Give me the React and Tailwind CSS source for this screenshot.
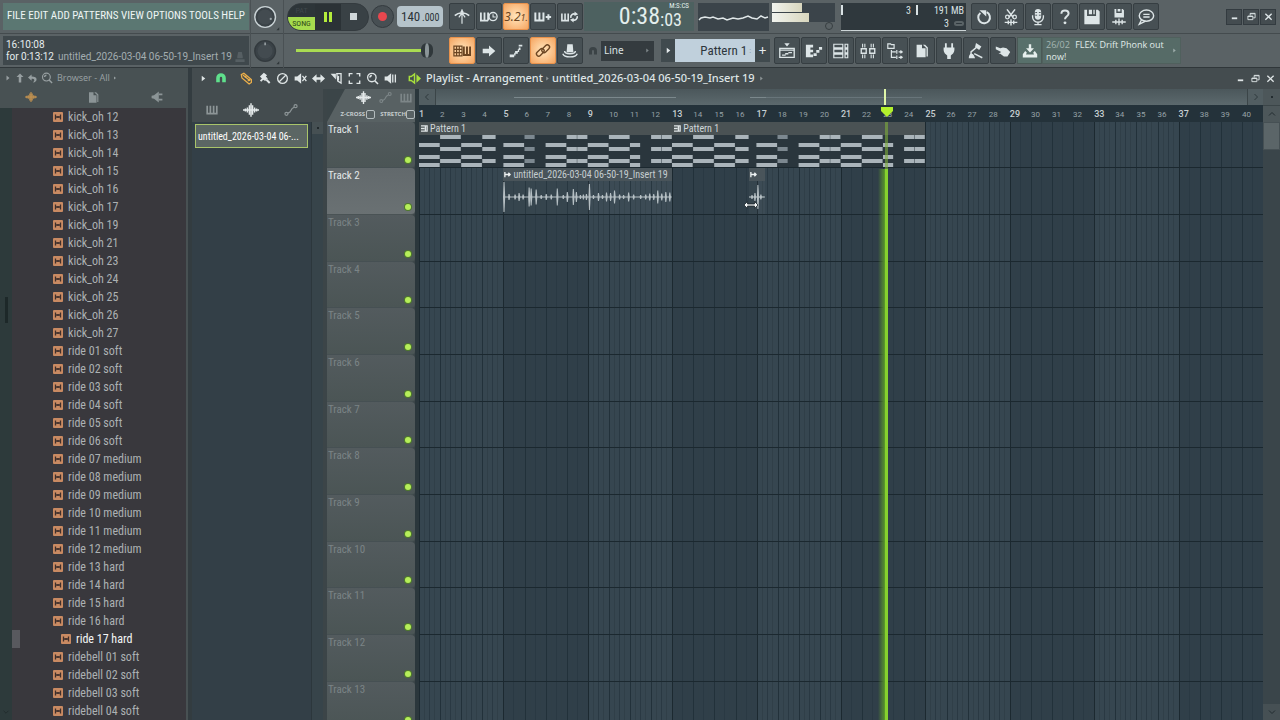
import clsx from "clsx";

const narrow = "font-['Roboto_Condensed','Open_Sans_Condensed','Roboto',sans-serif]";

const icons = {
  metronome: <><path d="M2 8.500c2-2 5-3 8-3s6 1 8 3" fill="none" stroke="currentColor" strokeWidth="1.800" /><path d="M10 1.500v16M10 5.500l-3.500 5M10 5.500l3.500 5" fill="none" stroke="currentColor" strokeWidth="1.300" /><path d="M7.500 5l2.500-3 2.500 3z" fill="currentColor" /></>,
  waitInput: <><path d="M1 5v9h8" fill="none" stroke="currentColor" strokeWidth="2" /><path d="M5 5v9M9 5v9" stroke="currentColor" strokeWidth="2" /><circle cx="14.500" cy="9.500" r="4.500" fill="none" stroke="currentColor" strokeWidth="1.500" /><path d="M14.500 7v3h3" fill="none" stroke="currentColor" strokeWidth="1.200" /></>,
  overdub: <path d="M1.500 5v9h9V5M6 5v9M13 10h6M16 7v6" fill="none" stroke="currentColor" strokeWidth="2.200" />,
  loopRec: <><path d="M1 6v8h7V6M4.500 6v8" fill="none" stroke="currentColor" strokeWidth="1.800" /><path d="M11 11a3.500 3.500 0 0 1 5-4M18 9a3.500 3.500 0 0 1-5 4" fill="none" stroke="currentColor" strokeWidth="1.800" /><path d="M15 4l4 3-4 2zM14 16l-4-3 4-2z" fill="currentColor" /></>,
  typing: <><path d="M1 4.500h9v11H1zM1 8.200h9M1 11.800h9M4 4.500v11M7 4.500v11" fill="none" stroke="currentColor" strokeWidth="1.300" /><path d="M12 5v9.500h7V5M15.500 5v9" fill="none" stroke="currentColor" strokeWidth="2.200" /></>,
  arrow: <path d="M3 7.500h7V4l7 6-7 6v-3.500H3z" fill="currentColor" />,
  steps: <path d="M3 14h5v3H3zM9 10h3v3H9zM13 6h2v3h-2zM13 3h4v2h-4zM8 12h1.500v3H8zM12 8h1.500v3H12z" fill="currentColor" />,
  link: <><rect x="2" y="9" width="10" height="5" rx="2.500" transform="rotate(-45 7 11.500)" fill="none" stroke="currentColor" strokeWidth="1.500" /><rect x="8" y="5" width="10" height="5" rx="2.500" transform="rotate(-45 13 7.500)" fill="none" stroke="currentColor" strokeWidth="1.500" /></>,
  hat: <><path d="M7 2.500h6l.8 9H6.200z" fill="currentColor" /><path d="M4 10c0 2 3 3 6 3s6-1 6-3M2 13c1 3 4 3.500 8 3.500s7-.5 8-3.500" fill="none" stroke="currentColor" strokeWidth="1.600" /></>,
  playlist: <><path d="M2 7h16v10H2z" fill="none" stroke="currentColor" strokeWidth="1.500" /><path d="M2 9h16M4.500 14.500h4M8 13h3.500M11.500 11.800h4" stroke="currentColor" strokeWidth="1.500" /><path d="M7 1.500h6L10 5z" fill="currentColor" /></>,
  pianoRoll: <path d="M1 3h8v3H6v2.500h3v3H6V14h3v3H1zM9.500 12.500H13v3H9.500zM12.500 9H16v3h-3.500zM15.500 5.500H19v3h-3.500z" fill="currentColor" />,
  rack: <path d="M2 2.500h10v4H2zM2 8h10v4H2zM2 13.500h10v4H2zM14.500 2.500h3v4h-3zM14.500 8h3v4h-3zM14.500 13.500h3v4h-3z" fill="none" stroke="currentColor" strokeWidth="1.300" />,
  mixer: <><path d="M2.500 7.500h5.500v5H2.500zM12 7.500h5.500v5H12z" fill="none" stroke="currentColor" strokeWidth="1.500" /><path d="M4 2v4M6.500 2v4M13.500 2v4M16 2v4M4 14v4M6.500 14v4M13.500 14v4M16 14v4" stroke="currentColor" strokeWidth="1.200" /></>,
  tree: <path d="M2 2h3l1 1h3v4H2zM6 9v8h5M6 11h5M12 9v4M14 11h4M12 15v4M14 17h4M16 9.500l2 1.500-2 1.500M16 15.500l2 1.500-2 1.500" fill="none" stroke="currentColor" strokeWidth="1.300" />,
  file: <><path d="M4 3h6v4h4v10H4z" fill="currentColor" /><path d="M11 3l4 4v9h1.500V6l-3-3z" fill="currentColor" /></>,
  plug: <path d="M5.500 1.500h2V6h5V1.500h2V6H16v3c0 3-2.500 5-4 6v4H8v-4c-1.500-1-4-3-4-6V6h1.500z" fill="currentColor" />,
  lamp: <><path d="M4.500 17V11l6-5M8 13l9 4.500" fill="none" stroke="currentColor" strokeWidth="1.600" /><path d="M10 1l6 4-2.500 4L9 5.500zM2 18c0-3 1-5 3-5s3 2 4 5z" fill="currentColor" /></>,
  hand: <path d="M2 5l5 2 3-1 4 1 4 4-3 5h-4l-4-3H5l3-2-6-3z" fill="currentColor" />,
  download: <><path d="M8.500 1.500h3v5H15l-5 5.500-5-5.500h3.500z" fill="currentColor" /><path d="M4 10l-3 4v4h18v-4l-3-4-2 2 1 2.500H5L6 12z" fill="currentColor" /></>,
  undo: <><path d="M6 5.500a6.500 6.500 0 1 0 7-.8" fill="none" stroke="currentColor" strokeWidth="2.200" /><path d="M5 2.500h7.500v7z" fill="currentColor" /></>,
  cut: <><path d="M5.500 1.500l7 9M14.500 1.500l-7 9" stroke="currentColor" strokeWidth="1.700" /><circle cx="6" cy="10" r="2" fill="none" stroke="currentColor" strokeWidth="1.400" /><circle cx="14" cy="10" r="2" fill="none" stroke="currentColor" strokeWidth="1.400" /><path d="M3 16h14M7 14v4M10 12.500v7M13 14v4" stroke="currentColor" strokeWidth="1.600" /></>,
  mic: <><rect x="6.500" y="1" width="7" height="12" rx="3.500" fill="currentColor" /><path d="M4 8v2a6 6 0 0 0 12 0V8M10 15v3M6 18.500h8" fill="none" stroke="currentColor" strokeWidth="1.500" /><path d="M7 5h2M7 8h2M11 5h2M11 8h2" stroke="#454e52" strokeWidth="1" /></>,
  help: <><path d="M6 6.500C6 4 7.500 2.700 10 2.700s4 1.300 4 3.500c0 3-4 3-4 6.300" fill="none" stroke="currentColor" strokeWidth="2.200" /><circle cx="10" cy="16.500" r="1.600" fill="currentColor" /></>,
  save: <path d="M1.500 2h3v7h10V2h2l2 2v14h-17zM6.500 2H10v5H6.500zM11.500 2h1.500v5h-1.500z" fill="currentColor" />,
  saveNew: <><path d="M5 1h2v4.500h6V1h1l1.500 1.500V10.500H5zM8.500 1h3v3h-3z" fill="currentColor" /><path d="M2.500 15.500h15M6.500 13v5M10 11.800v7.500M13.500 13v5" stroke="currentColor" strokeWidth="1.500" /></>,
  chat: <><ellipse cx="10.500" cy="8.500" rx="8" ry="6.200" fill="none" stroke="currentColor" strokeWidth="1.600" /><path d="M5 13l-2.500 5 7-3.500M7 7h7M7 10h7" fill="none" stroke="currentColor" strokeWidth="1.500" /></>,
  magnet: <path d="M2 17v-7a8 8 0 0 1 16 0v7h-6v-7a2 2 0 0 0-4 0v7z" fill="currentColor" />,
  pencil: <path d="M2 4l4-2 11.500 9.500V16L14 18.500 3 9zM4.500 4.500l11 9M7.500 8.500l2-2.500M12 14l3.500-3" fill="none" stroke="currentColor" strokeWidth="1.900" />,
  brush: <><path d="M3 7l6-6 5 4-2 2 3 3-4 4-3-2-3 3-2-2 3-3z" fill="currentColor" /><path d="M13 12l5 5" stroke="currentColor" strokeWidth="3" /></>,
  ban: <><circle cx="10" cy="10" r="7.500" fill="none" stroke="currentColor" strokeWidth="2" /><path d="M5 15L15 5" stroke="currentColor" strokeWidth="2" /></>,
  mute: <><path d="M1 7h4l6-5v16l-6-5H1z" fill="currentColor" /><path d="M13 6l6 8M19 6l-6 8" stroke="currentColor" strokeWidth="2" /></>,
  slip: <path d="M0 10l7-6.500V8h6V3.500L20 10l-7 6.500V12H7v4.500z" fill="currentColor" />,
  slice: <><path d="M1 2.500h8v9z" fill="currentColor" /><path d="M10.500 2.500H17v14.500l-5-3z" fill="none" stroke="currentColor" strokeWidth="2" /><path d="M13 6v7" stroke="currentColor" strokeWidth="2" /></>,
  select: <path d="M2 7V2.500h5M13 2.500h5V7M18 13v4.500h-5M7 17.500H2V13" fill="none" stroke="currentColor" strokeWidth="2.200" />,
  zoom: <><circle cx="9" cy="8.500" r="6.500" fill="none" stroke="currentColor" strokeWidth="2" /><path d="M6 8.500a3 3 0 0 1 3-3M13.500 13.500l5 5" fill="none" stroke="currentColor" strokeWidth="2.400" /></>,
  speaker: <><path d="M1 7h4l6-5v16l-6-5H1z" fill="currentColor" /><path d="M13.500 4v12M17.500 4v12" stroke="currentColor" strokeWidth="2" /></>,
  playSpeaker: <><path d="M2 7h3l5-4v14l-5-4H2z" fill="none" stroke="currentColor" strokeWidth="2.200" /><path d="M13 3.500l7 6.500-7 6.500z" fill="currentColor" /></>,
  keys: <path d="M2 3v13h16V3M7.300 3v13M12.700 3v13" fill="none" stroke="currentColor" strokeWidth="2.800" />,
  wave: <path d="M0 10h20M3 8v4M5.500 7v6M8 4v12M10 1.500v17M12 4v12M14.500 7v6M17 8v4" stroke="currentColor" strokeWidth="1.800" />,
  automation: <><path d="M5.500 14.500l3-1.500 3-5 3-2" fill="none" stroke="currentColor" strokeWidth="1.700" /><circle cx="3.500" cy="15.500" r="2.200" fill="none" stroke="currentColor" strokeWidth="1.700" /><circle cx="16.500" cy="4.500" r="2.200" fill="none" stroke="currentColor" strokeWidth="1.700" /></>,
  up: <path d="M10 1l7 7h-4.500v11h-5V8H3z" fill="currentColor" />,
  back: <path d="M8 1L0 8l8 7v-4.500c4 0 6 .5 6 3s-1 3-3 5.500c6-1 8-4 8-7.500 0-4-4-6-11-6z" fill="currentColor" />,
  megaphone: <><path d="M1 8l4-1 8-6v18l-8-6-4-1z" fill="currentColor" /><path d="M13 5.500h6M13 14.500h6" stroke="currentColor" strokeWidth="3" /></>,
  triangle: <path d="M5 2l10 8-10 8z" fill="currentColor" />,
  min: <path d="M4 12h12v4H4z" fill="currentColor" />,
  restore: <path d="M2 9h11v8H2zM7 8V3h11v10h-4M2 10h11M7 4h11" fill="none" stroke="currentColor" strokeWidth="2" />,
  close: <path d="M3 4l14 13M17 4L3 17" stroke="currentColor" strokeWidth="3" />,
  left: <path d="M13 4l-6 6 6 6" fill="none" stroke="currentColor" strokeWidth="2" />,
  right: <path d="M7 4l6 6-6 6" fill="none" stroke="currentColor" strokeWidth="2" />,
  chevUp: <path d="M4 13l6-6 6 6" fill="none" stroke="currentColor" strokeWidth="2" />,
  chevDown: <path d="M4 7l6 6 6-6" fill="none" stroke="currentColor" strokeWidth="2" />,
};

const Icon = ({ name, className = "size-4" }) => (
  <svg viewBox="0 0 20 20" className={clsx("shrink-0", className)} aria-hidden="true">
    {icons[name]}
  </svg>
);

const ToolButton = ({ icon, label, active, children }) => (
  <button
    aria-label={label}
    className={clsx(
      "flex h-[27px] w-[26px] shrink-0 items-center justify-center rounded-xs border",
      active
        ? "border-[#e8924c] bg-radial from-[#ffe6bd] to-[#f5a55f] text-[#6b4522]"
        : "border-[#363e42] bg-[#475054] text-[#dde5e7]"
    )}
  >
    {children || <Icon name={icon} className="size-[18px]" />}
  </button>
);

const Knob = ({ ring }) => (
  <svg viewBox="0 0 34 34" className="h-[34px] w-[34px] shrink-0 border-x border-[#4a5154]">
    <circle cx="15" cy="17" r="11" fill="#3a4247" stroke={ring ? "#c9d2d5" : "#333a3e"} strokeWidth="1.500" />
    <circle cx="15" cy="17" r="8" fill="#434b50" />
    {ring ? <circle cx="21" cy="19" r="1.200" fill="#9aa5a8" /> : <path d="M15 8v3" stroke="#a4adb0" strokeWidth="1.500" />}
    <path d="M30 28v3h-3z" fill="#30373a" />
  </svg>
);

const menus = ["FILE", "EDIT", "ADD", "PATTERNS", "VIEW", "OPTIONS", "TOOLS", "HELP"];

const TopBar = () => (
  <div className="flex h-[34px] items-center border-b border-[#444b4e]">
    <nav className={clsx("ml-[3px] flex h-[27px] w-[246px] shrink-0 items-center justify-between bg-[#5b7772] px-1 text-[11px] text-[#eef5f4]", narrow)}>
      {menus.map((m) => (
        <button key={m}>{m}</button>
      ))}
    </nav>
    <div className="w-px" />
    <Knob ring />
    <div className="ml-[3px] flex h-[28px] w-[82px] shrink-0 overflow-hidden rounded-[14px] border border-[#343b3f] bg-[#394145]">
      <button className={clsx("flex w-[27px] flex-col bg-[#2d3539] text-[8px]", narrow)} aria-label="Pattern or song mode">
        <span className="h-[13px] w-full leading-[13px] text-[#3f474b]">PAT</span>
        <span className="h-[13px] w-full bg-[#a6dc4e] leading-[13px] text-[#2f4a18]">SONG</span>
      </button>
      <button aria-label="Pause" className="flex w-[26px] items-center justify-center gap-[2px] bg-[#2b3236]">
        <span className="h-[10px] w-[3px] bg-[#b4ec3c]" />
        <span className="h-[10px] w-[3px] bg-[#b4ec3c]" />
      </button>
      <button aria-label="Stop" className="flex flex-1 items-center justify-center pr-[2px]">
        <span className="size-[7px] bg-[#d0d7d9]" />
      </button>
    </div>
    <button aria-label="Record" className="ml-[2px] flex size-[23px] shrink-0 items-center justify-center rounded-full border border-[#343b3f] bg-[#474f53]">
      <span className="size-[9px] rounded-full bg-[#e8474e]" />
    </button>
    <label className={clsx("ml-[3px] flex h-[21px] w-[46px] shrink-0 items-center rounded-sm bg-[#b5c3ca] pl-1 text-[#2b3338]", narrow)}>
      <input aria-label="Tempo" defaultValue="140" className="w-[21px] bg-transparent text-[13px] outline-none" />
      <span className="pt-0.5 text-[10px]">.000</span>
    </label>
    <div className="ml-[6px] flex gap-px">
      <ToolButton icon="metronome" label="Metronome" />
      <ToolButton icon="waitInput" label="Wait for input" />
      <ToolButton label="Countdown" active>
        <span className="text-xs italic">3.2<span className="text-[9px]">1.</span></span>
      </ToolButton>
      <ToolButton icon="overdub" label="Overdub" />
      <ToolButton icon="loopRec" label="Loop record" />
    </div>
    <div className={clsx("ml-px flex h-[29px] w-[110px] shrink-0 justify-end bg-[#4d6160] pr-[5px] text-[#e3eeec]", narrow)}>
      <span className="text-2xl leading-[29px]">0:38</span>
      <div className="flex w-[29px] flex-col">
        <span className="self-end text-[7px] leading-[8px]">M:S:CS</span>
        <span className="text-lg leading-[20px]">:03</span>
      </div>
    </div>
    <svg viewBox="0 0 71 28" className="ml-1 h-[28px] w-[71px] shrink-0 bg-[#3b444a]">
      <path d="M1 17l2-2 4-1 5 1 3-1 5 2 5-1 4 2 6-2 5 1 5-1 5-2 4 2 5 1 4-3 4 2 3-1" fill="none" stroke="#e0e7e8" strokeWidth="1.500" />
    </svg>
    <div className="ml-[3px] flex h-[28px] w-[63px] shrink-0 flex-col">
      <div className="flex h-[19px] flex-col gap-px bg-[#3b444a]">
        <span className="h-[9px] w-[30px] bg-linear-to-r from-[#f1f3ee] to-[#d8d6bd]" />
        <span className="h-[9px] w-[37px] bg-linear-to-r from-[#f1f3ee] to-[#d8d6bd]" />
      </div>
      <span className="mr-0.5 size-[8px] self-end rounded-full border border-[#373e41]" />
    </div>
    <div className={clsx("ml-[6px] flex h-[28px] w-[125px] shrink-0 border-b border-[#cdd5d7] bg-[#2f383d] pt-px text-[10px] leading-[13px] text-[#d9e2e4]", narrow)}>
      <span className="mt-px h-[10px] w-[2px] bg-[#d9e2e4]" />
      <span className="w-[68px] text-right">3</span>
      <span className="mt-px ml-[5px] h-[10px] w-[2px] bg-[#d9e2e4]" />
      <div className="flex flex-1 flex-col pr-[2px]">
        <span className="text-right">191 MB</span>
        <span className="flex items-center justify-end gap-[5px]">
          3<span className="h-[5px] w-[10px] rounded-full border-2 border-[#5a6366]" />
        </span>
      </div>
    </div>
    <div className="ml-[5px] flex gap-px">
      <ToolButton icon="undo" label="Undo" />
      <ToolButton icon="cut" label="Edison" />
      <ToolButton icon="mic" label="Record audio" />
      <ToolButton icon="help" label="Help" />
      <ToolButton icon="save" label="Save" />
      <ToolButton icon="saveNew" label="Save new version" />
      <ToolButton icon="chat" label="Feedback" />
    </div>
    <div className="mr-[4px] ml-auto flex gap-px text-[#dde5e7]">
      {["min", "restore", "close"].map((n) => (
        <button key={n} aria-label={n} className="flex size-4 items-center justify-center border border-[#333b40] bg-[#444c50]">
          <Icon name={n} className="size-[9px]" />
        </button>
      ))}
    </div>
  </div>
);

const SecondBar = () => (
  <div className="flex h-[34px] items-center border-b border-[#30373a]">
    <div className="ml-[3px] flex h-[29px] w-[246px] shrink-0 flex-col justify-center bg-[#3f484c] pl-[3px] font-['Roboto',sans-serif] text-[10px] leading-[12px] text-[#e6ecee]">
      <span>16:10:08</span>
      <span className="flex items-center">
        for 0:13:12 <span className="ml-[4px] text-[#a3adb0]">untitled_2026-03-04 06-50-19_Insert 19</span>
        <svg viewBox="0 0 10 12" className="ml-[3px] h-[11px] w-[10px]">
          <path d="M3 1h4l1 5v2H2V6zM0 9h10v3H0z" fill="#565f63" />
        </svg>
      </span>
    </div>
    <div className="w-px" />
    <Knob />
    <input
      type="range"
      aria-label="Main volume"
      defaultValue="100"
      className="ml-[12px] h-4 w-[137px] shrink-0 appearance-none bg-[linear-gradient(#a9db52,#a9db52)] bg-size-[100%_3px] bg-center bg-no-repeat [&::-webkit-slider-thumb]:h-[15px] [&::-webkit-slider-thumb]:w-[12px] [&::-webkit-slider-thumb]:appearance-none [&::-webkit-slider-thumb]:rounded-full [&::-webkit-slider-thumb]:border-x-4 [&::-webkit-slider-thumb]:border-[#30383b] [&::-webkit-slider-thumb]:bg-[#8b9598]"
    />
    <div className="ml-[16px] flex gap-px">
      <ToolButton icon="typing" label="Typing keyboard" active />
      <ToolButton icon="arrow" label="Step edit" />
      <ToolButton icon="steps" label="Note slide" />
      <ToolButton icon="link" label="Multilink" active />
      <ToolButton icon="hat" label="Big knob" />
    </div>
    <div className="ml-[2px] flex w-[16px] shrink-0 justify-center text-[#3b4346]">
      <Icon name="magnet" className="size-[10px]" />
    </div>
    <div className="flex h-[20px] w-[53px] shrink-0 items-center bg-[#343b3f] pr-1 text-[#dce3e5]">
      <select aria-label="Snap" className="w-full appearance-none pl-[3px] text-[10px] outline-none">
        <option>Line</option>
      </select>
      <Icon name="triangle" className="size-[5px] text-[#7d8689]" />
    </div>
    <div className="ml-[7px] flex h-[23px] w-[109px] shrink-0 text-[#e6ecee]">
      <button aria-label="Patterns" className="flex w-[14px] items-center justify-center bg-[#404a4e]">
        <Icon name="triangle" className="size-[7px]" />
      </button>
      <button className={clsx("flex flex-1 items-center justify-end gap-[2px] bg-[#c0d0dc] pr-1 text-[13px] text-[#2d363c]", narrow)}>
        Pattern 1<span className="text-[8px] text-[#7f8d97]">:</span>
      </button>
      <button aria-label="Add pattern" className="w-[15px] bg-[#404a4e] text-sm">+</button>
    </div>
    <div className="ml-[4px] flex gap-px">
      <ToolButton icon="playlist" label="Playlist" />
      <ToolButton icon="pianoRoll" label="Piano roll" />
      <ToolButton icon="rack" label="Channel rack" />
      <ToolButton icon="mixer" label="Mixer" />
      <ToolButton icon="tree" label="Browser" />
      <ToolButton icon="file" label="Project" />
      <ToolButton icon="plug" label="Plugins" />
      <ToolButton icon="lamp" label="Tempo tapper" />
      <ToolButton icon="hand" label="Touch" />
    </div>
    <button aria-label="Download" className="ml-px flex h-[27px] w-[25px] shrink-0 items-center justify-center border border-[#4a5956] bg-[#58706b] text-[#e6efed]">
      <Icon name="download" className="size-4" />
    </button>
    <button className="flex h-[27px] w-[139px] shrink-0 items-center border border-[#50605d] bg-[#566b67] pr-[3px] pl-[3px] text-left font-['Open_Sans',sans-serif] text-[9px] leading-[12px] text-[#e0ebe9]">
      <span className="flex-1">
        <span className="block"><span className="mr-[3px] text-[#a5b6b3]">26/02</span> FLEX: Drift Phonk out</span>
        <span className="block">now!</span>
      </span>
      <Icon name="triangle" className="size-[5px] text-[#9cacaa]" />
    </button>
  </div>
);

const samples = [
  ...["12", "13", "14", "15", "16", "17", "19", "21", "23", "24", "25", "26", "27"].map((n) => `kick_oh ${n}`),
  ...["01", "02", "03", "04", "05", "06"].map((n) => `ride ${n} soft`),
  ...["07", "08", "09", "10", "11", "12"].map((n) => `ride ${n} medium`),
  ...["13", "14", "15", "16", "17"].map((n) => `ride ${n} hard`),
  ...["01", "02", "03", "04"].map((n) => `ridebell ${n} soft`),
];

const SampleIcon = () => (
  <svg viewBox="0 0 10 10" className="size-[10px] shrink-0">
    <rect width="10" height="10" rx="1" fill="#c98a62" />
    <path d="M2.500 2.500v5M2.500 5h5M7.500 2.500v5M5 4v2" fill="none" stroke="#3f2f2b" strokeWidth="1.300" />
  </svg>
);

const Browser = () => (
  <aside className="flex w-[192px] shrink-0 flex-col border-r-4 border-[#333c40] bg-[#485153]">
    <div className="flex h-[20px] shrink-0 items-center pl-[5px] text-[10px] text-[#979fa1]">
      <Icon name="triangle" className="size-[6px]" />
      <Icon name="up" className="ml-1 size-[10px]" />
      <Icon name="back" className="ml-[3px] size-[9px]" />
      <Icon name="zoom" className="ml-1 size-[12px]" />
      <span className="ml-1 text-[9px]">Browser - All</span>
      <Icon name="triangle" className="ml-[3px] size-[4px]" />
    </div>
    <div className="grid h-[20px] shrink-0 grid-cols-3 place-items-center pb-0.5 text-[#8b9496]">
      <button aria-label="Sounds"><Icon name="wave" className="size-[12px] text-[#c49350]" /></button>
      <button aria-label="Files"><Icon name="file" className="size-[15px]" /></button>
      <button aria-label="Plugins"><Icon name="megaphone" className="size-[12px]" /></button>
    </div>
    <div className="mr-[2px] flex min-h-0 flex-1 overflow-hidden bg-[#39383d]">
      <div className="flex w-[12px] shrink-0 flex-col items-center bg-[#2d3a3b] text-[#1f2a2b]">
        <span className="mt-[189px] h-[26px] w-[3px] bg-[#1d2829]" />
        <Icon name="chevDown" className="mt-auto mb-1 size-2" />
      </div>
      <ul className="flex-1">
        {samples.map((s) => {
          const on = s === "ride 17 hard";
          return (
            <li key={s} className="flex h-[18px] items-center">
              {on && <span className="h-[18px] w-[8px] bg-[#58595e]" />}
              <button className={clsx("flex items-center gap-[5px] pl-[41px] text-xs leading-[18px]", narrow, on ? "text-[#f4f6f6]" : "text-[#acb1b3]")}>
                <SampleIcon />
                {s}
              </button>
            </li>
          );
        })}
      </ul>
    </div>
  </aside>
);

const tools = ["brush", "ban", "mute", "slip", "slice", "select", "zoom", "speaker"];

const TitleBar = () => (
  <div className="flex h-[21px] shrink-0 items-center bg-[#444c4f] pb-px pl-[8px] text-[#dfe5e6]">
    <Icon name="triangle" className="size-[7px]" />
    <button aria-label="Snap to grid" className="ml-[8px] text-[#5fe08c]"><Icon name="magnet" className="size-[12px]" /></button>
    <button aria-label="Draw" className="ml-[13px] text-[#eeb04a]"><Icon name="pencil" className="size-[13px]" /></button>
    <div className="ml-[5px] flex gap-[5px]">
      {tools.map((t) => (
        <button key={t} aria-label={t}><Icon name={t} className="size-[13px]" /></button>
      ))}
    </div>
    <Icon name="playSpeaker" className="ml-[11px] size-[13px] text-[#a8e03c]" />
    <h1 className="ml-[5px] flex items-center gap-[2px] text-[11px] font-medium">
      Playlist - Arrangement
      <Icon name="triangle" className="size-[5px] text-[#8d9597]" />
      untitled_2026-03-04 06-50-19_Insert 19
      <Icon name="triangle" className="ml-[2px] size-[5px] text-[#8d9597]" />
    </h1>
    <div className="mr-[5px] ml-auto flex gap-[6px]">
      {["min", "restore", "close"].map((n) => (
        <button key={n} aria-label={n}><Icon name={n} className="size-[9px]" /></button>
      ))}
    </div>
  </div>
);

const Picker = () => (
  <div className="flex w-[135px] shrink-0 flex-col border-r-4 border-[#3c4548]">
    <div className="grid h-[33px] shrink-0 grid-cols-3 place-items-center bg-[#444c4f] pt-2 pr-3 text-[#8d9597]">
      <button aria-label="Patterns"><Icon name="keys" className="size-[12px]" /></button>
      <button aria-label="Audio clips"><Icon name="wave" className="size-[16px] text-[#e5eaeb]" /></button>
      <button aria-label="Automation clips"><Icon name="automation" className="size-[14px]" /></button>
    </div>
    <div className="flex flex-1 bg-[#333f47]">
      <div className="flex-1 px-[3px] pt-[2px]">
        <button className={clsx("flex h-[24px] w-[113px] items-center border border-[#a9c46a] bg-[#5b6664] pl-[2px] text-[10px] text-white", narrow)}>
          untitled_2026-03-04 06-...
        </button>
      </div>
      <div className="w-[12px] border-l border-[#2c373c] bg-[#37444a]">
        <div className="flex h-[12px] items-center justify-center bg-[#465053]">
          <span className="size-[2px] bg-[#222a2d]" />
        </div>
      </div>
    </div>
  </div>
);

const trackNumbers = Array.from({ length: 13 }, (_, i) => i + 1);
const bars = Array.from({ length: 40 }, (_, i) => i + 1);

// every third track is one pixel shorter, headers and lanes alike
const trackHeight = (n) => (n % 3 === 1 ? "h-[46px]" : "h-[47px]");

const TrackHeaders = () => (
  <div className="flex w-[92px] shrink-0 flex-col border-r-4 border-[#2b373c] bg-[#3b4548]">
    <div className="flex h-[33px] shrink-0 flex-col justify-between bg-[#586163] pb-[3px] [clip-path:polygon(18px_0,100%_0,100%_100%,0_100%)]">
      <div className="flex items-center justify-end gap-[8px] pt-px text-[#7d8688]">
        <Icon name="wave" className="size-[15px] text-[#e5eaeb]" />
        <Icon name="automation" className="size-[13px]" />
        <Icon name="keys" className="mr-[3px] size-[12px]" />
      </div>
      <div className="flex items-center justify-end gap-[5px] text-[6px] leading-[9px] font-bold text-[#c4cbcd]">
        <label className="flex items-center">
          Z-CROSS
          <input type="checkbox" className="ml-px size-[9px] appearance-none rounded-xs border border-[#b4bcbe]" />
        </label>
        <label className="flex items-center">
          STRETCH
          <input type="checkbox" className="size-[9px] appearance-none rounded-xs border border-[#b4bcbe]" />
        </label>
      </div>
    </div>
    <div className="min-h-0 flex-1 overflow-hidden">
      {trackNumbers.map((n) => (
        <div
          key={n}
          className={clsx(
            "flex justify-between rounded-r-sm border-b pl-px",
            trackHeight(n),
            n === 2 ? "border-[#4a5355] bg-linear-to-b from-[#62696c] to-[#6a7173]" : "border-[#465053] bg-linear-to-b from-[#535b5e] to-[#4b5555]"
          )}
        >
          <span className={clsx("text-[11px] leading-[15px]", narrow, n < 3 ? "text-[#e3e8e9]" : "text-[#7b8486]")}>Track {n}</span>
          <input
            type="checkbox"
            defaultChecked
            aria-label={`Track ${n} on`}
            className="mr-[4px] mb-[4px] size-[6px] appearance-none self-end rounded-full bg-[#b6ee5a] ring-1 ring-[#4f7a2c]"
          />
        </div>
      ))}
    </div>
  </div>
);

// low rows and high rows of the pattern preview, in bars from the clip start
const LOW = [2, 5, 7];
const HIGH = [0, 3, 6];
const notes = [
  { at: 0, len: 1, rows: LOW },
  { at: 1, len: 1, rows: HIGH },
  { at: 2, len: 1, rows: LOW },
  { at: 3, len: 0.65, rows: HIGH },
  { at: 4, len: 1, rows: LOW },
  { at: 5, len: 0.5, rows: HIGH, dim: true },
  { at: 6, len: 1, rows: LOW },
  { at: 7, len: 0.5, rows: HIGH },
  { at: 7.5, len: 0.5, rows: HIGH },
  { at: 8, len: 1, rows: LOW },
  { at: 9, len: 1, rows: HIGH },
  { at: 10, len: 0.5, rows: LOW },
  { at: 11, len: 0.5, rows: HIGH },
  { at: 11.5, len: 0.5, rows: HIGH },
];

const PatternClip = ({ start, end }) => (
  <div style={{ gridColumn: `${start} / ${end}` }} className="flex flex-col overflow-hidden bg-[#2a363d]">
    <div className={clsx("flex h-[13px] shrink-0 items-center gap-[2px] bg-[#4a5254] pl-[2px] text-[10px] text-[#cfd6d8]", narrow)}>
      <svg viewBox="0 0 8 8" className="size-[7px]">
        <path d="M0 1h7v6H0M0 4h4M5 1v6" fill="none" stroke="#dfe5e6" strokeWidth="1.500" />
      </svg>
      Pattern 1
    </div>
    <svg viewBox="0 0 252 32" preserveAspectRatio="none" className="h-[32px] w-full">
      {notes.map((n) =>
        n.rows.map((r) => (
          <rect key={`${n.at}-${r}`} x={n.at * 21} y={r * 4} width={n.len * 21 - 0.4} height="4" fill={n.dim ? "#7c8890" : "#aab4ba"} />
        ))
      )}
    </svg>
  </div>
);

const longWave = [
  [1, 30], [6, 6], [12, 5], [16, 8], [20, 5], [26, 19], [28, 17], [33, 15], [38, 4], [43, 6], [48, 5], [54, 17], [60, 4], [64, 10],
  [70, 16], [73, 10], [77, 4], [80, 5], [83, 6], [86, 26], [90, 4], [95, 8], [99, 4], [103, 9], [107, 8], [111, 13], [116, 5],
  [120, 4], [125, 9], [130, 5], [137, 4], [142, 5], [146, 7], [150, 6], [154, 13], [158, 7], [162, 10], [166, 9],
];
const shortWave = [[3, 4], [6, 8], [9, 24], [12, 5]];

const AudioClip = ({ start, end, width, peaks, name }) => (
  <div style={{ gridColumn: `${start} / ${end}` }} className="flex flex-col overflow-hidden bg-white/3">
    <div className={clsx("flex h-[13px] shrink-0 items-center gap-[2px] bg-[#49545a] pl-px text-[10px] whitespace-nowrap text-[#c5cdd0]", narrow)}>
      <svg viewBox="0 0 8 8" className="size-[7px] shrink-0">
        <path d="M1 1v6M1 4h6M5 2l2 2-2 2" fill="none" stroke="#eef2f3" strokeWidth="1.500" />
      </svg>
      {name}
    </div>
    <svg viewBox={`0 0 ${width} 32`} preserveAspectRatio="none" className="h-[32px] w-full">
      <path d={`M0 16h${width}`} stroke="#b6c0c4" strokeWidth="1.200" />
      {peaks.map(([x, h]) => (
        <path key={x} d={`M${x - 1} 16L${x - 0.5} ${16 - h / 2}h1L${x + 1.2} 16L${x + 0.5} ${16 + h / 2}h-1z`} fill="#b6c0c4" />
      ))}
    </svg>
  </div>
);

const Timeline = () => (
  <div className="relative flex min-w-0 flex-1 flex-col overflow-hidden bg-[#33434c]">
    <div className="flex h-[16px] shrink-0 items-center bg-[#525e62] text-[#2f393d]">
      <button aria-label="Scroll left" className="flex h-full w-[17px] items-center justify-center border-r border-[#3b4548]">
        <Icon name="left" className="size-[10px]" />
      </button>
      <div className="flex h-full flex-1 items-center bg-linear-to-b from-[#4b575b] to-[#5c696d]">
        <span className="ml-[78px] h-px w-[162px] bg-[#7b888c]" />
        <span className="ml-[74px] h-px w-[16px] bg-[#7b888c]" />
        <span className="h-px w-[156px] bg-[#68757a]" />
      </div>
      <button aria-label="Scroll right" className="flex h-full w-[16px] items-center justify-center border-l border-[#3b4548]">
        <Icon name="right" className="size-[10px]" />
      </button>
    </div>
    <div className="grid h-[17px] shrink-0 grid-cols-[repeat(40,minmax(0,1fr))] items-center bg-[#24323a] pt-0.5 font-['Roboto',sans-serif]">
      {bars.map((b) => (
        <span key={b} className={b % 4 === 1 ? "text-[9px] font-medium text-[#c6ced1]" : "text-[8px] text-[#97a2a7]"}>
          {b}
        </span>
      ))}
    </div>
    <div className="relative min-h-0 flex-1">
      <div className="absolute inset-0 grid grid-cols-[repeat(40,minmax(0,1fr))]">
        {bars.map((b) => (
          <div
            key={b}
            className={clsx(
              "flex border-l",
              Math.floor((b - 1) / 4) % 2 ? "bg-[#303f49]" : "bg-[#364650]",
              b % 4 === 1 ? "border-[#1c2930]" : "border-[#22313a]"
            )}
          >
            <div className="w-1/4 border-r border-[#303f48]" />
            <div className="w-1/4 border-r border-[#2a3943]" />
            <div className="w-1/4 border-r border-[#303f48]" />
          </div>
        ))}
      </div>
      {trackNumbers.map((n) => (
        <div key={n} className={clsx("relative grid grid-cols-[repeat(320,minmax(0,1fr))] border-b border-[#1b282f]", trackHeight(n))}>
          {n === 1 && <PatternClip start={1} end={97} />}
          {n === 1 && <PatternClip start={97} end={193} />}
          {n === 2 && <AudioClip start={33} end={97} width={168} peaks={longWave} name="untitled_2026-03-04 06-50-19_Insert 19" />}
          {n === 2 && <AudioClip start={126} end={132} width={16} peaks={shortWave} />}
        </div>
      ))}
      <svg viewBox="0 0 16 10" className="absolute top-[78px] left-[38.4%] h-[10px] w-[16px]">
        <path d="M1 5l3.500-3.500V4h7V1.500L15 5l-3.500 3.500V6h-7v2.500z" fill="#f4f7f7" stroke="#1c2529" strokeWidth="0.800" />
      </svg>
    </div>
    <div className="absolute inset-y-0 left-[54.6%] flex w-[14px] flex-col items-center">
      <span className="mr-[3px] h-[16px] w-[2px] shrink-0 bg-[#dff5a8]" />
      <svg viewBox="0 0 14 12" className="mt-px h-[12px] w-[14px] shrink-0">
        <path d="M1 1h12v4l-6 6-6-6z" fill="#b2f02c" />
      </svg>
      <span className="mt-[4px] h-[47px] w-[3px] shrink-0 bg-[#7fae3c]/60" />
      <span className="mr-[7px] w-[10px] flex-1 border-r-3 border-[#86d02e] bg-linear-to-r from-transparent to-[#5c9a2c]" />
    </div>
  </div>
);

const VerticalScroll = () => (
  <div className="flex w-[17px] shrink-0 flex-col items-center bg-[#3a454a] text-[#232c30]">
    <div className="flex h-[16px] w-full items-center justify-center bg-[#4d575a]">
      <span className="size-[2px] bg-current" />
    </div>
    <button aria-label="Scroll up" className="flex h-[17px] w-full items-center justify-center border-t border-[#3b4548] bg-[#4d575a]">
      <Icon name="chevUp" className="size-[10px]" />
    </button>
    <div className="h-[28px] w-full border border-[#465054] bg-[#5b6568]" />
    <button aria-label="Scroll down" className="mt-auto flex h-[16px] w-full items-center justify-center bg-[#465054]">
      <Icon name="chevDown" className="size-[10px]" />
    </button>
  </div>
);

export default function App() {
  return (
    <div className="flex h-screen flex-col overflow-hidden bg-[#3a4346] font-['Noto_Sans',sans-serif] text-[#dfe5e6]">
      <header className="shrink-0 bg-[#5a6265]">
        <TopBar />
        <SecondBar />
      </header>
      <div className="flex min-h-0 flex-1">
        <Browser />
        <main className="flex min-w-0 flex-1 flex-col">
          <TitleBar />
          <div className="flex min-h-0 flex-1 overflow-hidden">
            <Picker />
            <TrackHeaders />
            <Timeline />
            <VerticalScroll />
          </div>
        </main>
      </div>
    </div>
  );
}
